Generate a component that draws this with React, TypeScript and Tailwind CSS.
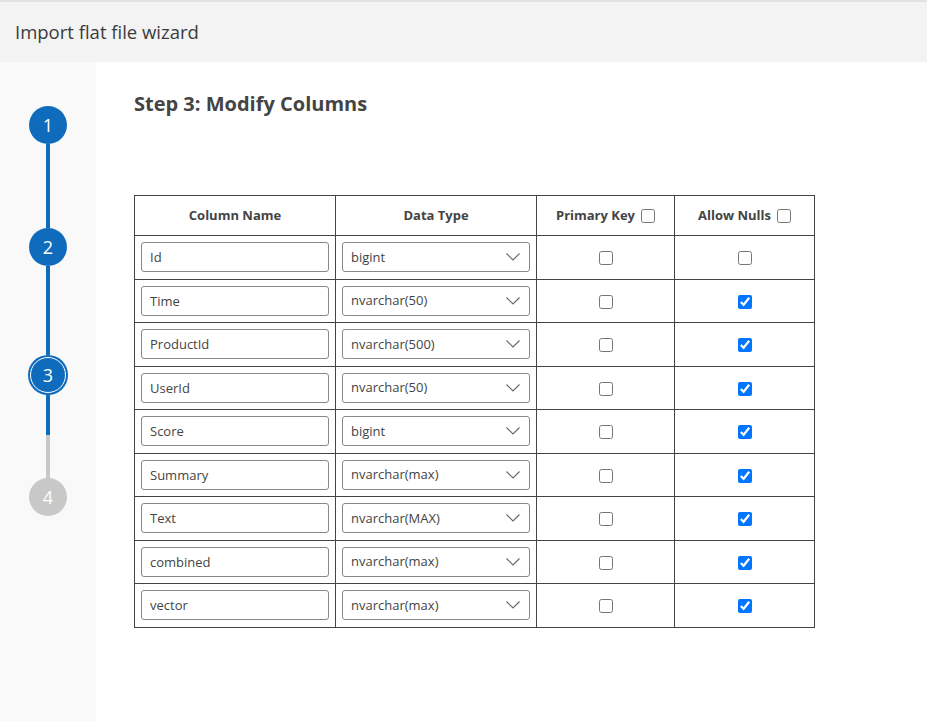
const rows = [
  { name: "Id", type: "bigint", nulls: false },
  { name: "Time", type: "nvarchar(50)", nulls: true },
  { name: "ProductId", type: "nvarchar(500)", nulls: true },
  { name: "UserId", type: "nvarchar(50)", nulls: true },
  { name: "Score", type: "bigint", nulls: true },
  { name: "Summary", type: "nvarchar(max)", nulls: true },
  { name: "Text", type: "nvarchar(MAX)", nulls: true },
  { name: "combined", type: "nvarchar(max)", nulls: true },
  { name: "vector", type: "nvarchar(max)", nulls: true },
];

// step bubbles down the left rail
function Step({ n, state }: { n: number; state: "done" | "current" | "todo" }) {
  if (state === "current") {
    return (
      <div className="flex h-[40px] w-[40px] items-center justify-center rounded-full bg-[#0f6cbd]">
        <div className="flex h-[36px] w-[36px] items-center justify-center rounded-full border border-white text-[18px] text-white">
          {n}
        </div>
      </div>
    );
  }
  return (
    <div
      className={
        state === "done"
          ? "flex h-[38px] w-[38px] items-center justify-center rounded-full bg-[#0f6cbd] text-[18px] text-white"
          : "flex h-[38px] w-[38px] items-center justify-center rounded-full bg-[#c8c8c8] text-[18px] text-white"
      }
    >
      {n}
    </div>
  );
}

function Line({ h, gray }: { h: string; gray?: boolean }) {
  return <div className={`${h} w-[4px] ${gray ? "bg-[#c8c8c8]" : "bg-[#0f6cbd]"}`} />;
}

function Chevron() {
  return (
    <svg
      className="pointer-events-none absolute right-[10px] top-[11px]"
      width="14"
      height="8"
      viewBox="0 0 14 8"
      fill="none"
      stroke="#666"
      strokeWidth="1.1"
    >
      <polyline points="0.5,0.5 7,7 13.5,0.5" />
    </svg>
  );
}

export default function App() {
  return (
    <div
      className="flex h-[721px] w-[927px] flex-col bg-white text-[#444]"
      style={{ fontFamily: '"Open Sans", "Noto Sans", sans-serif' }}
    >
      <div className="h-[2px] bg-[#e1e1e1]" />
      <div className="flex h-[60px] items-center bg-[#f3f3f3] px-[15px] pb-[1px] text-[18.5px] text-[#3b3b3b]">
        Import flat file wizard
      </div>

      <div className="flex flex-1">
        {/* stepper */}
        <div className="flex w-[96px] flex-col items-center bg-[#f9f9fa] pt-[44px]">
          <Step n={1} state="done" />
          <Line h="h-[84px]" />
          <Step n={2} state="done" />
          <Line h="h-[89px]" />
          <Step n={3} state="current" />
          <Line h="h-[40px]" />
          <Line h="h-[43px]" gray />
          <Step n={4} state="todo" />
        </div>

        <div className="flex-1 pl-[38px] pt-[27px]">
          <h1 className="text-[20px] font-bold text-[#444]">Step 3: Modify Columns</h1>

          <table className="mt-[76px] border-collapse border border-[#444] text-[13px]">
            <thead>
              <tr className="h-[40px]">
                <th className="w-[201px] border border-[#444] font-bold">Column Name</th>
                <th className="w-[201px] border border-[#444] font-bold">Data Type</th>
                <th className="w-[138px] border border-[#444] font-bold">
                  <span className="inline-flex items-center gap-[6px]">
                    Primary Key
                    <input type="checkbox" className="h-[14px] w-[14px]" />
                  </span>
                </th>
                <th className="w-[140px] border border-[#444] font-bold">
                  <span className="inline-flex items-center gap-[6px]">
                    Allow Nulls
                    <input type="checkbox" className="h-[14px] w-[14px]" />
                  </span>
                </th>
              </tr>
            </thead>
            <tbody>
              {rows.map((r) => (
                <tr key={r.name} className="h-[43.5px]">
                  <td className="border border-[#444] px-[6px]">
                    <input
                      defaultValue={r.name}
                      className="h-[30px] w-full rounded-[3px] border border-[#888] px-[8px] text-[13px] text-[#444] outline-none"
                    />
                  </td>
                  <td className="border border-[#444] px-[6px]">
                    <div className="relative">
                      <select
                        defaultValue={r.type}
                        className="h-[30px] w-full appearance-none rounded-[3px] border border-[#888] bg-white px-[8px] text-[13px] text-[#444] outline-none"
                      >
                        <option>{r.type}</option>
                      </select>
                      <Chevron />
                    </div>
                  </td>
                  <td className="border border-[#444] text-center">
                    <input type="checkbox" className="h-[14px] w-[14px] align-middle" />
                  </td>
                  <td className="border border-[#444] text-center">
                    <input
                      type="checkbox"
                      defaultChecked={r.nulls}
                      className="h-[14px] w-[14px] align-middle"
                    />
                  </td>
                </tr>
              ))}
            </tbody>
          </table>
        </div>
      </div>
    </div>
  );
}
